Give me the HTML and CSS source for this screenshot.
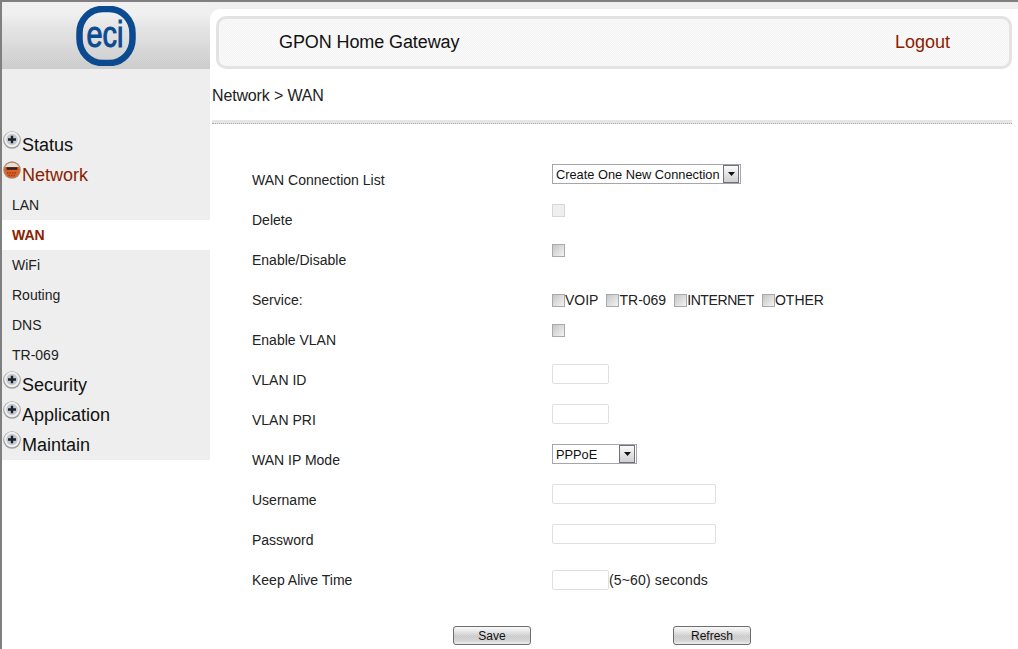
FILE: index.html
```html
<!DOCTYPE html>
<html lang="en">
<head>
<meta charset="utf-8">
<title>GPON Home Gateway</title>
<link rel="stylesheet" href="styles.css">
</head>
<body>
<div class="page">
  <aside class="sidebar">
    <div class="logo-band">
      <svg class="logo" width="60" height="60" viewBox="0 0 60 60">
        <rect x="3.500" y="3" width="53" height="54" rx="23" ry="24" fill="none" stroke="#0b4a91" stroke-width="6.500"/>
        <text x="29" y="41" text-anchor="middle" class="logo-text" textLength="37" lengthAdjust="spacingAndGlyphs">eci</text>
      </svg>
    </div>
    <nav class="menu">
      <div class="menu-head">
        <svg class="bullet" width="18" height="18" viewBox="0 0 18 18"><circle cx="9" cy="9" r="8.800" fill="#9f9f9f"/><circle cx="9" cy="8.500" r="7.800" fill="#f0f0f0"/><circle cx="9" cy="8.500" r="5.800" fill="#c9cacd"/><path d="M5 8.500h8M9 4.800v7.400" stroke="#182230" stroke-width="2.400"/></svg>
        <span>Status</span>
      </div>
      <div class="menu-head active">
        <svg class="bullet" width="18" height="18" viewBox="0 0 18 18"><circle cx="9" cy="9" r="8.800" fill="#a88f80"/><circle cx="9" cy="9" r="7.800" fill="#d9622a"/><path d="M2 6a7.800 7.800 0 0 1 14 0z" fill="#e6ded8"/><path d="M3.600 7.500h10.800" stroke="#36201a" stroke-width="2.600"/><path d="M4 12h10M5.500 14.500h7" stroke="#a53a14" stroke-width="1.500" stroke-dasharray="1.500 1"/></svg>
        <span>Network</span>
      </div>
      <a class="menu-item">LAN</a>
      <a class="menu-item current">WAN</a>
      <a class="menu-item">WiFi</a>
      <a class="menu-item">Routing</a>
      <a class="menu-item">DNS</a>
      <a class="menu-item">TR-069</a>
      <div class="menu-head">
        <svg class="bullet" width="18" height="18" viewBox="0 0 18 18"><circle cx="9" cy="9" r="8.800" fill="#9f9f9f"/><circle cx="9" cy="8.500" r="7.800" fill="#f0f0f0"/><circle cx="9" cy="8.500" r="5.800" fill="#c9cacd"/><path d="M5 8.500h8M9 4.800v7.400" stroke="#182230" stroke-width="2.400"/></svg>
        <span>Security</span>
      </div>
      <div class="menu-head">
        <svg class="bullet" width="18" height="18" viewBox="0 0 18 18"><circle cx="9" cy="9" r="8.800" fill="#9f9f9f"/><circle cx="9" cy="8.500" r="7.800" fill="#f0f0f0"/><circle cx="9" cy="8.500" r="5.800" fill="#c9cacd"/><path d="M5 8.500h8M9 4.800v7.400" stroke="#182230" stroke-width="2.400"/></svg>
        <span>Application</span>
      </div>
      <div class="menu-head">
        <svg class="bullet" width="18" height="18" viewBox="0 0 18 18"><circle cx="9" cy="9" r="8.800" fill="#9f9f9f"/><circle cx="9" cy="8.500" r="7.800" fill="#f0f0f0"/><circle cx="9" cy="8.500" r="5.800" fill="#c9cacd"/><path d="M5 8.500h8M9 4.800v7.400" stroke="#182230" stroke-width="2.400"/></svg>
        <span>Maintain</span>
      </div>
    </nav>
  </aside>
  <main class="main">
    <div class="main-inner">
      <header class="title-bar">
        <span class="title">GPON Home Gateway</span>
        <a class="logout">Logout</a>
      </header>
      <div class="crumb">Network &gt; WAN</div>
      <div class="divider"></div>
      <form class="form">
        <div class="row"><label class="lbl">WAN Connection List</label><div class="ctl"><span class="sel"><select class="sel-native"><option>Create One New Connection</option></select><span class="sel-btn"><svg width="7" height="4" viewBox="0 0 7 4"><path d="M0 0h7L3.500 4z" fill="#111"/></svg></span></span></div></div>
        <div class="row"><label class="lbl">Delete</label><div class="ctl"><input class="chk" type="checkbox" disabled></div></div>
        <div class="row"><label class="lbl">Enable/Disable</label><div class="ctl"><input class="chk" type="checkbox"></div></div>
        <div class="row"><label class="lbl">Service:</label><div class="ctl services">
          <span class="svc"><input class="chk" type="checkbox">VOIP</span>
          <span class="svc"><input class="chk" type="checkbox">TR-069</span>
          <span class="svc tight"><input class="chk" type="checkbox">INTERNET</span>
          <span class="svc"><input class="chk" type="checkbox">OTHER</span>
        </div></div>
        <div class="row"><label class="lbl">Enable VLAN</label><div class="ctl"><input class="chk" type="checkbox"></div></div>
        <div class="row"><label class="lbl">VLAN ID</label><div class="ctl"><input class="txt short" type="text"></div></div>
        <div class="row"><label class="lbl">VLAN PRI</label><div class="ctl"><input class="txt short" type="text"></div></div>
        <div class="row"><label class="lbl">WAN IP Mode</label><div class="ctl"><span class="sel mode"><select class="sel-native"><option>PPPoE</option></select><span class="sel-btn"><svg width="7" height="4" viewBox="0 0 7 4"><path d="M0 0h7L3.500 4z" fill="#111"/></svg></span></span></div></div>
        <div class="row"><label class="lbl">Username</label><div class="ctl"><input class="txt long" type="text"></div></div>
        <div class="row"><label class="lbl">Password</label><div class="ctl"><input class="txt long" type="password"></div></div>
        <div class="row"><label class="lbl">Keep Alive Time</label><div class="ctl keep"><input class="txt short" type="text"><span>(5~60) seconds</span></div></div>
        <div class="actions">
          <button class="btn" type="button">Save</button>
          <button class="btn" type="button">Refresh</button>
        </div>
      </form>
    </div>
  </main>
</div>
</body>
</html>
```
FILE: styles.css
```css
* { box-sizing: border-box; }
html, body { margin: 0; height: 100%; overflow: hidden; background: #fff; }
body { font-family: "Liberation Sans", Arial, sans-serif; color: #111; }
.page { display: flex; height: 649px; border-top: 2px solid #7f7f7f; border-left: 2px solid #7f7f7f; }
.sidebar { width: 208px; flex: none; }
.logo-band {
  height: 67px; display: flex; justify-content: center;
  background:
    repeating-conic-gradient(rgba(255,255,255,.1) 0 25%, transparent 0 50%) 0 0 / 2px 2px,
    linear-gradient(180deg, #efefef 0, #efefef 12px, #e2e2e2 26px, #dedede 36px, #d6d6d6 46px, #cacaca 67px);
}
.logo { display: block; margin-top: 4px; }
.logo-text { font-family: "Liberation Sans", Arial, sans-serif; font-size: 36px; fill: #0b4a91; stroke: #0b4a91; stroke-width: 1px; }
.menu { padding-top: 61px; background: #eee; }
.menu-head { height: 30px; display: flex; align-items: flex-start; color: #111; font-size: 18px; line-height: 30px; padding-left: 1px; }
.menu-head.active { color: #8a2100; }
.menu-head span { line-height: 28px; padding-top: 1px; margin-left: 1px; }
.bullet { flex: none; margin-top: 1px; }
.menu-item { display: block; height: 30px; line-height: 30px; padding-left: 10px; font-size: 14px; color: #222; }
.menu-item.current { background: #fff; color: #8a2100; font-weight: bold; }
.main { flex: 1; background: #efefef; }
.main-inner { height: 100%; margin-top: 7px; background: #fff; border-top-left-radius: 10px; padding: 7px 6px 0 6px; }
.title-bar {
  height: 53px; border: 3px solid #e3e3e3; border-radius: 10px;
  background: repeating-conic-gradient(#f4f4f4 0 25%, #fafafa 0 50%) 0 0 / 2px 2px;
  display: flex; justify-content: space-between; align-items: center;
  font-size: 18px; padding: 0 59px 0 60px; color: #111;
}
.title { letter-spacing: -.1px; }
.logout { color: #8a2100; }
.crumb { font-size: 16px; line-height: 20px; margin: 17px 0 0 -4px; color: #222; letter-spacing: -.15px; }
.divider { height: 4px; margin: 14px 0 0 -4px; background: #e6e6e6; border-bottom: 1px dotted #a8a8a8; }
.form { padding: 36px 0 0 36px; font-size: 14px; }
.row { display: grid; grid-template-columns: 300px 1fr; height: 40px; }
.lbl { line-height: 40px; color: #222; }
.ctl { padding-top: 4px; color: #222; }
.chk { appearance: none; -webkit-appearance: none; display: block; width: 13px; height: 13px; margin: 0; border: 1px solid #a9a9a9; background: linear-gradient(135deg, #c6c6c6, #f3f3f3); }
.chk:disabled { border-color: #d6d6d6; background: #efefef; }
.services { display: flex; align-items: center; padding-top: 0; height: 40px; gap: 8px; }
.svc { display: inline-flex; align-items: center; }
.tight { letter-spacing: -.4px; }
.sel { display: inline-flex; align-items: center; height: 20px; border: 1px solid #a5a5ad; background: #fff; padding-right: 1px; }
.sel-native { appearance: none; -webkit-appearance: none; border: 0; outline: 0; background: transparent; padding: 0 0 0 3px; margin: 0; font: 12.8px "Liberation Sans", Arial, sans-serif; height: 18px; color: #111; }
.sel-btn { width: 16px; height: 18px; margin-left: 3px; display: flex; align-items: center; justify-content: center; border: 1px solid #6f7078; background: linear-gradient(#fafafa, #cfcfcf); }
.sel.mode { width: 85px; justify-content: space-between; }
.txt { display: block; height: 20px; padding: 0; border: 1px solid #dfdfdf; border-radius: 2px; background: #fff; outline: 0; }
.txt.short { width: 57px; }
.txt.long { width: 164px; }
.keep { display: flex; align-items: center; height: 40px; padding-top: 0; letter-spacing: .15px; }
.actions { display: flex; gap: 142px; margin: 26px 0 0 201px; }
.btn {
  width: 78px; height: 19px; padding: 0; border: 1px solid #6e6e6e; border-radius: 3px;
  font: 12px "Liberation Sans", Arial, sans-serif; color: #111;
  background:
    repeating-conic-gradient(rgba(255,255,255,.25) 0 25%, transparent 0 50%) 0 0 / 2px 2px,
    linear-gradient(#f7f7f7 0, #e4e4e4 25%, #c6c6c6 55%, #cfcfcf 80%, #ececec 100%);
}
```
